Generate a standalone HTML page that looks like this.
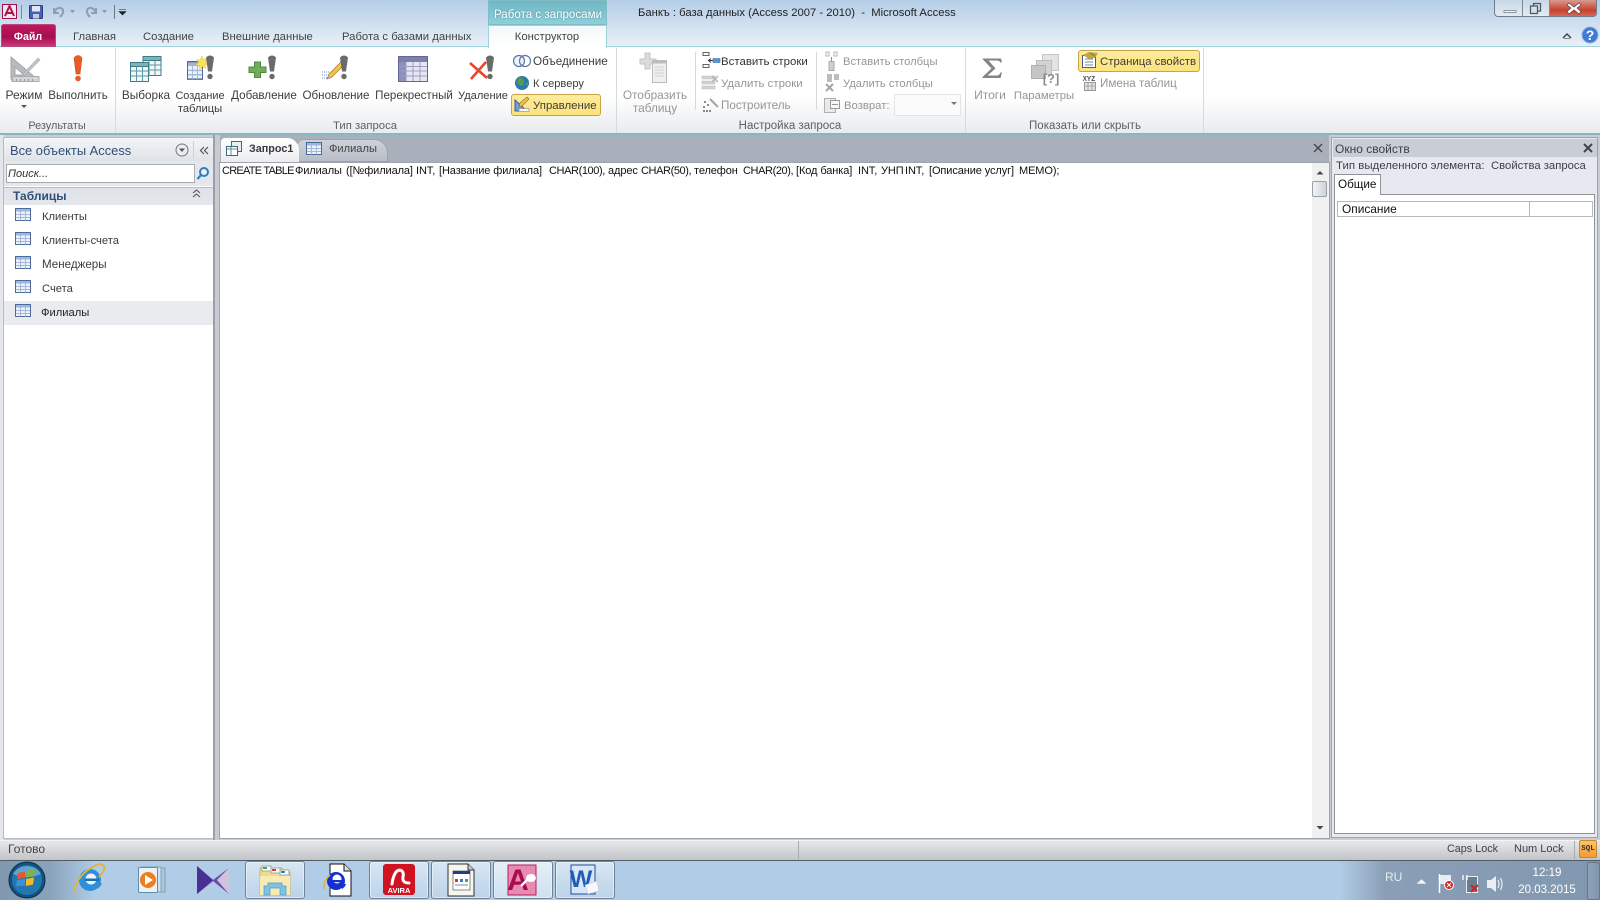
<!DOCTYPE html>
<html lang="ru"><head><meta charset="utf-8"><title>Банкъ</title>
<style>
html,body{margin:0;padding:0}
body{width:1600px;height:900px;overflow:hidden;position:relative;background:#c9cdd3;font:11.6px/16px "Liberation Sans","Noto Sans CJK SC",sans-serif;color:#3c3c3c}
div,span{position:absolute;white-space:nowrap}
.c{transform:translateX(-50%);text-align:center}
.d{color:#969696}
.g{color:#5c6066}
.tab{color:#444;top:29px;font-size:11.3px}
.box{box-sizing:border-box;border:1px solid #c9a24e;border-radius:3px;background:linear-gradient(#fdeb9e,#fde37a)}
.sep{width:1px;background:#d5dae0}
.n{font-size:11.2px}
.q{top:163px;color:#111;letter-spacing:-.1px;font-size:11px}
.l{letter-spacing:-.4px}
.tb{box-sizing:border-box;top:861px;height:38px;border:1px solid #6f8296;border-radius:3px;background:linear-gradient(#d8e6f3,#bcd3e9);box-shadow:inset 0 0 0 1px rgba(255,255,255,.45)}
svg{position:absolute;left:0;top:0}
</style></head><body>

<div style="left:0;top:0;width:1600px;height:47px;background:linear-gradient(#b4cde6,#e9f1f8)"></div>
<div style="left:488px;top:0;width:119px;height:25px;background:linear-gradient(#6fb7c4,#8fd0da);box-sizing:border-box;border:1px solid #7fbcc6"></div>
<span class="c" style="left:548px;top:7px;color:#fff;text-shadow:0 0 2px #4a8b98">Работа с запросами</span>
<div style="left:0;top:47px;width:1600px;height:86px;background:linear-gradient(#fff 0,#fff 58%,#e9ebee 100%)"></div>
<div style="left:0;top:46px;width:488px;height:1px;background:#9fd2da"></div>
<div style="left:607px;top:46px;width:993px;height:1px;background:#9fd2da"></div>
<div style="left:488px;top:25px;width:119px;height:23px;box-sizing:border-box;background:linear-gradient(#f3f9fb,#fff);border:1px solid #9fd2da;border-bottom:0"></div>
<div style="left:1px;top:24px;width:55px;height:23px;border-radius:3px 3px 0 0;background:linear-gradient(#c2185f,#a80c50 55%,#cf3a7a);box-shadow:inset 0 0 0 1px #b54a7c"></div>
<span class="c" style="left:28px;top:29px;color:#fff;font-weight:bold;font-size:10.6px">Файл</span>
<span class="tab" style="left:73px">Главная</span>
<span class="tab" style="left:143px">Создание</span>
<span class="tab" style="left:222px">Внешние данные</span>
<span class="tab" style="left:342px">Работа с базами данных</span>
<span class="tab c" style="left:547px">Конструктор</span>
<span style="left:638px;top:5px;color:#222;font-size:11.25px">Банкъ : база данных (Access 2007 - 2010)&nbsp; -&nbsp; Microsoft Access</span>

<div style="left:1494px;top:0;width:103px;height:17px;box-sizing:border-box;border:1px solid #6d7b8a;border-top:0;border-radius:0 0 4px 4px;background:linear-gradient(#c9d8e6,#e3ebf2);overflow:hidden"><div style="left:54px;top:0;width:50px;height:17px;background:linear-gradient(#d99a90,#c9402e 60%,#d8705f)"></div><div style="left:27px;top:0;width:1px;height:17px;background:#7c8a98"></div><div style="left:54px;top:0;width:1px;height:17px;background:#7c8a98"></div></div>

<!-- ribbon seps -->
<div class="sep" style="left:115px;top:48px;height:85px"></div>
<div class="sep" style="left:616px;top:48px;height:85px"></div>
<div class="sep" style="left:695px;top:52px;height:58px"></div>
<div class="sep" style="left:816px;top:52px;height:58px"></div>
<div class="sep" style="left:965px;top:48px;height:85px"></div>
<div class="sep" style="left:1203px;top:48px;height:85px"></div>

<!-- ribbon labels -->
<span class="c" style="left:24px;top:87px;font-size:12px">Режим</span>
<span class="c" style="left:78px;top:88px">Выполнить</span>
<span class="c g" style="left:57px;top:118px;font-size:10.9px">Результаты</span>
<span class="c" style="left:146px;top:87px;font-size:11.8px">Выборка</span>
<span class="c" style="left:200px;top:88px;font-size:10.9px">Создание</span>
<span class="c" style="left:200px;top:101px;font-size:11.2px">таблицы</span>
<span class="c" style="left:264px;top:88px">Добавление</span>
<span class="c" style="left:336px;top:88px">Обновление</span>
<span class="c" style="left:414px;top:88px;font-size:11.55px">Перекрестный</span>
<span class="c" style="left:483px;top:88px;font-size:11.1px">Удаление</span>
<span style="left:533px;top:54px;font-size:11.7px">Объединение</span>
<span style="left:533px;top:76px;font-size:11.1px">К серверу</span>
<div class="box" style="left:511px;top:94px;width:90px;height:22px"></div>
<span style="left:533px;top:98px;font-size:11.45px">Управление</span>
<span class="c g" style="left:365px;top:118px;font-size:11.3px">Тип запроса</span>
<span class="c d" style="left:655px;top:87px;font-size:11.8px">Отобразить</span>
<span class="c d" style="left:655px;top:100px;font-size:11.8px">таблицу</span>
<span style="left:721px;top:54px;color:#333;font-size:11.45px">Вставить строки</span>
<span class="d" style="left:721px;top:76px;font-size:11.4px">Удалить строки</span>
<span class="d" style="left:721px;top:98px;font-size:11.65px">Построитель</span>
<span class="d" style="left:843px;top:54px;font-size:11.2px">Вставить столбцы</span>
<span class="d" style="left:843px;top:76px;font-size:11.2px">Удалить столбцы</span>
<span class="d" style="left:844px;top:98px;font-size:11.3px">Возврат:</span>
<div style="left:894px;top:94px;width:67px;height:22px;box-sizing:border-box;border:1px solid #e2e4e7;background:#fbfbfb"></div>
<span class="c g" style="left:790px;top:118px;font-size:11.5px">Настройка запроса</span>
<span class="c d" style="left:990px;top:87px;font-size:12px">Итоги</span>
<span class="c d" style="left:1044px;top:88px;font-size:11.3px">Параметры</span>
<div class="box" style="left:1078px;top:50px;width:122px;height:22px"></div>
<span style="left:1100px;top:54px;font-size:11.4px">Страница свойств</span>
<span class="d" style="left:1100px;top:76px;font-size:11.65px">Имена таблиц</span>
<span class="c g" style="left:1085px;top:118px;font-size:11.55px">Показать или скрыть</span>

<!-- teal line -->
<div style="left:0;top:133px;width:1600px;height:2px;background:#84b9c3"></div>

<!-- nav pane -->
<div style="left:0;top:135px;width:4px;height:705px;background:#e3e6ea"></div>
<div style="left:4px;top:138px;width:209px;height:700px;background:#fff;box-shadow:0 0 0 1px #b8bcc2"></div>
<div style="left:4px;top:138px;width:209px;height:23px;background:linear-gradient(#f4f5f7,#dfe3e8)"></div>
<div style="left:4px;top:161px;width:209px;height:25px;background:#e4e7eb"></div>
<span style="left:10px;top:143px;color:#2f4f78;font-size:12.9px">Все объекты Access</span>
<div style="left:6px;top:164px;width:189px;height:19px;box-sizing:border-box;border:1px solid #a9adb3;background:#fff"></div>
<span style="left:8px;top:166px;font-style:italic;font-size:11px;color:#333">Поиск...</span>
<div style="left:4px;top:187px;width:209px;height:18px;background:linear-gradient(#dfe2e8,#e4e7ed);border-top:1px solid #b9bdc3;box-sizing:border-box"></div>
<span style="left:13px;top:188px;font-weight:bold;color:#2f4f78;font-size:12px">Таблицы</span>
<div style="left:4px;top:301px;width:209px;height:24px;background:#e9ebef"></div>
<span class="n" style="left:42px;top:208.500px;top:209px">Клиенты</span>
<span class="n" style="left:42px;top:233px">Клиенты-счета</span>
<span class="n" style="left:42px;top:257px;font-size:11.6px">Менеджеры</span>
<span class="n" style="left:42px;top:281px">Счета</span>
<span class="n" style="left:41px;top:305px;color:#222">Филиалы</span>
<div style="left:213px;top:135px;width:7px;height:705px;background:#c8ccd2;border-left:2px solid #9b9fa6;box-sizing:border-box"></div>

<!-- document -->
<div style="left:220px;top:135px;width:1109px;height:27px;background:#aab0bb"></div>
<div style="left:220px;top:162px;width:1109px;height:1px;background:#5f646c"></div>
<div style="left:296px;top:139px;width:92px;height:23px;background:linear-gradient(#cdd1d8,#b9bec7);border-radius:8px 14px 0 0;border:1px solid #9da2ab;box-sizing:border-box"></div>
<div style="left:221px;top:138px;width:78px;height:25px;background:linear-gradient(#fff,#e9ebee);border-radius:4px 12px 0 0"></div>
<span style="left:249px;top:141px;font-weight:bold;color:#3a3a3a;font-size:10.8px">Запрос1</span>
<span style="left:329px;top:141px;color:#444;font-size:11.1px">Филиалы</span>
<div style="left:220px;top:163px;width:1109px;height:675px;background:#fff;box-shadow:0 0 0 1px #a0a4aa"></div>
<span class="q" style="left:222px;letter-spacing:-.75px">CREATE TABLE</span>
<span class="q" style="left:295px">Филиалы</span>
<span class="q" style="left:346px">([№филиала]</span>
<span class="q" style="left:416px">INT,</span>
<span class="q" style="left:439px">[Название филиала]</span>
<span class="q l" style="left:549px">CHAR(100),</span>
<span class="q" style="left:608px">адрес</span>
<span class="q l" style="left:641px">CHAR(50),</span>
<span class="q" style="left:694px">телефон</span>
<span class="q l" style="left:743px">CHAR(20),</span>
<span class="q" style="left:796px">[Код банка]</span>
<span class="q" style="left:858px">INT,</span>
<span class="q" style="left:881px">УНП</span>
<span class="q" style="left:905px">INT,</span>
<span class="q" style="left:929px">[Описание услуг]</span>
<span class="q" style="left:1019px">MEMO);</span>
<div style="left:1312px;top:163px;width:17px;height:675px;background:#f0f0f0"></div>
<div style="left:1312px;top:181px;width:15px;height:16px;box-sizing:border-box;border:1px solid #9aa0a8;border-radius:2px;background:linear-gradient(90deg,#f4f4f4,#cfd2d6)"></div>

<!-- properties -->
<div style="left:1331px;top:137px;width:267px;height:701px;box-sizing:border-box;background:#e6e9ef;border:1px solid #9ea3aa"></div>
<div style="left:1333px;top:139px;width:264px;height:18px;background:#c9ced6"></div>
<span style="left:1335px;top:141px;color:#3d4048;font-size:12px">Окно свойств</span>
<span style="left:1336px;top:158px;color:#3d4048;font-size:11.45px">Тип выделенного элемента:</span>
<span style="left:1491px;top:158px;color:#3d4048;font-size:11.3px">Свойства запроса</span>
<div style="left:1334px;top:194px;width:261px;height:640px;box-sizing:border-box;background:#fff;border:1px solid #8e9298"></div>
<div style="left:1334px;top:174px;width:47px;height:21px;box-sizing:border-box;background:#fff;border:1px solid #8e9298;border-bottom:0"></div>
<span style="left:1338px;top:177px;color:#111;font-size:11.7px">Общие</span>
<div style="left:1337px;top:201px;width:256px;height:16px;box-sizing:border-box;background:#fff;border:1px solid #b5b7ba"></div>
<div style="left:1529px;top:201px;width:1px;height:16px;background:#b5b7ba"></div>
<span style="left:1342px;top:201px;color:#111;font-size:11.9px">Описание</span>

<!-- status -->
<div style="left:0;top:840px;width:1600px;height:20px;background:linear-gradient(#e7e8ea,#c2c4c8);border-top:1px solid #f2f3f4;box-sizing:border-box"></div>
<span style="left:8px;top:841px;color:#444;font-size:12px">Готово</span>
<div style="left:798px;top:841px;width:1px;height:18px;background:#a9abaf"></div>
<span style="left:1447px;top:841px;color:#3d4150;font-size:10.8px">Caps Lock</span>
<span style="left:1514px;top:841px;color:#3d4150;font-size:11px">Num Lock</span>
<div style="left:1574px;top:841px;width:1px;height:18px;background:#a9abaf"></div>
<div style="left:1579px;top:840px;width:18px;height:18px;box-sizing:border-box;border:1px solid #c8862e;border-radius:2px;background:linear-gradient(#fbc46a,#f39a32)"></div>
<span class="c" style="left:1588px;top:841px;font:bold 7.5px/16px 'Liberation Mono',monospace;color:#333">SQL</span>

<!-- taskbar -->
<div style="left:0;top:860px;width:1600px;height:40px;background:linear-gradient(90deg,#7f97af 0,#8aa3bb 50px,#b0cce6 95px,#b0cce6 1340px,#8a9fb6 1385px,#8298b0 1600px);border-top:1px solid #4f5c6a;box-sizing:border-box"></div>
<div class="tb" style="left:245px;width:60px"></div>
<div class="tb" style="left:369px;width:60px"></div>
<div class="tb" style="left:431px;width:60px"></div>
<div class="tb" style="left:493px;width:60px;background:linear-gradient(#e6eff7,#cfe0f0)"></div>
<div class="tb" style="left:555px;width:60px"></div>
<span style="left:1385px;top:869px;color:#e6ecf2;font-size:12px">RU</span>
<span class="c" style="left:1547px;top:865px;color:#fff;font-size:11.6px">12:19</span>
<span class="c" style="left:1547px;top:882px;color:#fff;font-size:11.5px">20.03.2015</span>
<div style="left:1587px;top:862px;width:13px;height:38px;box-sizing:border-box;border:1px solid #65778a;border-radius:2px;background:linear-gradient(90deg,#8ea3b9,#7f95ac)"></div>

<svg width="1600" height="900" viewBox="0 0 1600 900">
<defs>
<g id="ex"><path d="M-4 2Q0-2 4 2L2 16H-2Z" fill="#6a6a6a"/><circle cy="21" r="2.7" fill="#6a6a6a"/></g>
<g id="nt"><rect x=".5" y=".5" width="15" height="12" fill="#eef3fa" stroke="#4c6a9c"/><rect x="1" y="1" width="14" height="2.500" fill="#9fb6d8"/><path d="M5.500 3.500v9M10.500 3.500v9M1 6.500h14M1 9.500h14" stroke="#a3b8d6" fill="none"/></g>
<g id="tt"><rect x=".5" y=".5" width="18" height="19" fill="#f1f6f6" stroke="#3e7d87"/><rect x=".5" y=".5" width="18" height="4" fill="#7fb4b4" stroke="#3e7d87"/><path d="M6.500 4.500v15M12.500 4.500v15M1 9h17M1 14h17" stroke="#5f98a2" fill="none"/></g>
</defs>

<!-- QAT -->
<rect x="2.500" y="4.500" width="14" height="14" fill="#f5e6ee" stroke="#a01050"/><path d="M5 16L9.500 6 14 16M6.500 13h6" stroke="#a8124f" stroke-width="2" fill="none"/>
<path d="M21.500 5v14" stroke="#7d8a99"/>
<rect x="29.500" y="5.500" width="13" height="13" rx="1" fill="#4a5fb6" stroke="#2e3d7d"/><rect x="32" y="6" width="8" height="5.500" fill="#dfe6f5"/><rect x="33" y="14" width="6" height="4.500" fill="#c4cbda"/>
<path d="M54 8v5h5M54 13Q57 6 62 8.500 65 12 60 17" fill="none" stroke="#8f9eae" stroke-width="2"/>
<path d="M96 8v5h-5M96 13Q93 6 88 8.500 85 12 90 17" fill="none" stroke="#8f9eae" stroke-width="2"/>
<path d="M70 10h5l-2.500 3zM102 10h5l-2.500 3z" fill="#8a97a5"/>
<path d="M114.500 5v14" stroke="#6d7985"/><path d="M119 9.500h7M119 11.500h7l-3.500 3.500z" fill="#222" stroke="#222" stroke-width=".6"/>

<!-- Top right -->
<path d="M1504 10.500h12v2h-12z" fill="#f4f6f8" stroke="#6b7a88" stroke-width=".7"/>
<rect x="1533.500" y="3.500" width="7" height="7.500" fill="none" stroke="#4f5c68" stroke-width="1.300"/><rect x="1530.500" y="6" width="7" height="7.500" fill="#d7e0e8" stroke="#4f5c68" stroke-width="1.300"/>
<path d="M1569 4l5 4 5-4 2 2-4 3 4 3.500-2 2.500-5-4-5 4-2-2.500 4-3.500-4-3z" fill="#fff" stroke="#5a3f3c" stroke-width=".7" transform="translate(0 -1)"/>
<path d="M1563 38l4-4 4 4" fill="none" stroke="#444" stroke-width="1.500"/><path d="M1564 38.500h6" stroke="#888"/>
<circle cx="1590" cy="35" r="8" fill="#3f7bd0" stroke="#8cb1e4"/><text x="1590" y="40" font-family="Liberation Sans" font-weight="bold" font-size="14" fill="#fff" text-anchor="middle">?</text>

<!-- Режим -->
<path d="M11 57L37 79H11ZM15 67V75H24Z" fill="#b9bcbf" fill-rule="evenodd" stroke="#a3a6a9"/><rect x="12" y="76.500" width="27" height="5" fill="#d3d5d7" stroke="#a9acae"/><path d="M12.500 79v2M16.500 79v2M20.500 79v2M24.500 79v2M28.500 79v2M32.500 79v2" stroke="#999"/><path d="M23 74L38 58l2 2-15 15-3 1z" fill="#c3c5c8" stroke="#a5a8ab" stroke-width=".6"/><path d="M21 105h6l-3 3z" fill="#555"/>
<!-- Выполнить -->
<path d="M74 58Q78 53 82 58L80 74H76Z" fill="#ea5a28" stroke="#d34a1c" stroke-width=".6"/><circle cx="78" cy="78.500" r="2.800" fill="#ea5a28"/>
<!-- Выборка -->
<use href="#tt" x="142.500" y="56"/><use href="#tt" x="130" y="62"/>
<!-- Создание -->
<use href="#nt" transform="translate(187 61) scale(1 1.450)"/><path d="M202 56l1.500 3.500 3.500-1-1.500 3.500 3 2-3.500 1 1 3.500-3.500-2-2.500 2.500-.5-3.500-3.500-.5 2.500-2.500-2-3 3.500.5z" fill="#f6e35a" stroke="#e4c43e" stroke-width=".5"/>
<use href="#ex" x="210" y="55.500"/>
<!-- Добавление -->
<path d="M254.500 62h6v5h5.500v5.500h-5.500v5h-6v-5H249V67h5.500z" fill="#74ab5a" stroke="#4f8a3e"/>
<use href="#ex" x="272" y="55.500"/>
<!-- Обновление -->
<path d="M327 79l2-5 12-12 3 3-12 12z" fill="#f2c04c" stroke="#a47a2a" stroke-width=".7"/><path d="M340 62l2-2 3.500 3-2 2z" fill="#c45050"/><path d="M322 72h7M322 75h7M322 78h7" stroke="#6f8fcf" stroke-dasharray="1 1"/>
<use href="#ex" x="344" y="55.500"/>
<!-- Перекрестный -->
<rect x="398.500" y="56.500" width="29" height="25" fill="#e5e6f2" stroke="#62669a"/><rect x="399" y="57" width="7" height="24" fill="#8d90b8"/><rect x="399" y="57" width="28" height="5" fill="#7c80ab"/><path d="M406 62v19M413 62v19M420 62v19M399 66.500h28M399 71h28M399 76h28" stroke="#9b9ec2"/>
<!-- Удаление -->
<path d="M470 63l17 15M486 62l-15 17" stroke="#e8452a" stroke-width="2.600"/>
<use href="#ex" x="490" y="55.500"/>
<!-- Объединение / сервер / управление -->
<circle cx="519" cy="61" r="5.500" fill="#eef3fa" stroke="#5a75a8" stroke-width="1.200"/><circle cx="525" cy="61" r="5.500" fill="none" stroke="#5a75a8" stroke-width="1.200"/>
<circle cx="522" cy="83" r="7" fill="#2f78b8"/><path d="M518 78q5-1 6 3t-3 5q-3-1-4-4zM525 84l3-2v4z" fill="#4f9e4a"/>
<path d="M515 111V100l12 11Z" fill="#6e9de0" stroke="#2e5fb0"/><path d="M520 103l7-6 2 2-7 7-3 1z" fill="#f0c24c" stroke="#8a6a20" stroke-width=".6"/><rect x="519" y="108.500" width="10" height="3" fill="#f6f6f6" stroke="#888" stroke-width=".6"/>

<!-- Отобразить -->
<path d="M645 53h5v6h6v5h-6v5h-5v-5h-5v-5h5z" fill="#dcdcdc" stroke="#c5c5c5"/><rect x="652.500" y="60.500" width="14" height="22" fill="#efefef" stroke="#bcbcbc"/><rect x="652.500" y="60.500" width="14" height="3" fill="#bcbcbc"/><path d="M655 67h9M655 70h9M655 73h9M655 76h9" stroke="#cfcfcf"/>
<!-- rows -->
<path d="M703 52.500h6v3h-6zM703 64.500h6v3h-6z" fill="#fff" stroke="#333" stroke-width=".8"/><path d="M709 60.500h4" stroke="#333"/><path d="M711 58.500l-2.500 2 2.500 2" fill="none" stroke="#333"/><rect x="713" y="58.500" width="7" height="4" fill="#5f91d4" stroke="#3f6fb0" stroke-width=".6"/>
<path d="M702 76h13v3h-13zM702 81h13v3h-13zM702 86h13v3h-13z" fill="#d3d3d3" stroke="#bcbcbc" stroke-width=".6"/><path d="M712 76l6 6M718 76l-6 6" stroke="#b2b2b2" stroke-width="1.500"/>
<path d="M710 99l8 8" stroke="#a5a5a5" stroke-width="2"/><path d="M704 102h2M707 105h2M703 107h2M703 111h2M706 111h2M709 111h2" stroke="#666" stroke-width="1.500"/>
<!-- cols -->
<path d="M826 52h3v4h-3zM834 52h3v4h-3z" fill="none" stroke="#b5b5b5"/><path d="M831.500 57v4" stroke="#888"/><rect x="829" y="61.500" width="5" height="9" fill="#cfcfcf" stroke="#a8a8a8"/>
<path d="M827 74h5v8h-5zM834 74h5v6h-5z" fill="#bdbdbd"/><path d="M826 84l7 7M833 84l-7 7" stroke="#a5a5a5" stroke-width="2"/>
<rect x="824.500" y="98.500" width="11" height="14" fill="#eaeaea" stroke="#b0b0b0"/><rect x="830.500" y="100.500" width="9" height="8" fill="#f7f7f7" stroke="#999"/><path d="M832 104.500h6" stroke="#999"/>
<path d="M951 102h6l-3 3z" fill="#777"/>
<!-- Итоги -->
<path d="M983 58.500h18l1 4h-1.500q-1-2-4-2h-8l7 8-8 7h9q3 0 4-3h1.500l-1.500 5.500h-18v-1l9-8.500-9-9.500z" fill="#848484"/>
<!-- Параметры -->
<rect x="1042.500" y="54.500" width="16" height="16" fill="#e3e3e3" stroke="#c6c6c6"/><rect x="1036.500" y="60.500" width="15" height="14" fill="#d3d3d3" stroke="#bcbcbc"/><rect x="1031.500" y="65.500" width="14" height="13" fill="#c6c6c6" stroke="#aeaeae"/>
<text x="1051" y="83" font-family="Liberation Sans" font-weight="bold" font-size="13" fill="#8d8d8d" text-anchor="middle">[?]</text>
<!-- Страница свойств -->
<rect x="1082.500" y="55.500" width="13" height="12" fill="#fff" stroke="#3f5f90"/><path d="M1085 59h8M1085 62h8M1085 65h8" stroke="#6b87b5"/><path d="M1083 55l6-3 9 1-3 5-6 1z" fill="#c9a43c"/><path d="M1090 53l5 3" stroke="#5a9e5a" stroke-width="1.500"/>
<!-- Имена таблиц -->
<text x="1089" y="81" font-family="Liberation Mono" font-weight="bold" font-size="7" fill="#555" text-anchor="middle">XYZ</text>
<rect x="1084.500" y="82.500" width="11" height="8" fill="#e2e2e2" stroke="#9a9a9a"/><path d="M1088 83v7M1092 83v7M1085 86h10" stroke="#a9a9a9"/>

<!-- nav icons -->
<circle cx="182" cy="150" r="6" fill="#eaecef" stroke="#70757c"/><path d="M179 148.500h6l-3 3.500z" fill="#555"/>
<path d="M193.500 141v17" stroke="#cdd0d5"/><path d="M204 147l-3.500 3.500 3.500 3.500M208 147l-3.500 3.500 3.500 3.500" fill="none" stroke="#555" stroke-width="1.200"/>
<circle cx="204" cy="172" r="4" fill="#e8f2fb" stroke="#2f7fc0" stroke-width="2"/><path d="M201 175l-3.500 4" stroke="#2f7fc0" stroke-width="2.200"/>
<path d="M193 193l3.500-3 3.500 3M193 197l3.500-3 3.500 3" fill="none" stroke="#555" stroke-width="1.100"/>
<use href="#nt" x="15" y="208"/><use href="#nt" x="15" y="232"/><use href="#nt" x="15" y="256"/><use href="#nt" x="15" y="280"/><use href="#nt" x="15" y="304"/>
<!-- tab icons -->
<rect x="231.500" y="141.500" width="10" height="10" fill="#e5efef" stroke="#3e6c78"/><rect x="226.500" y="146.500" width="11" height="9" fill="#fff" stroke="#3e6c78"/><path d="M227 149h10M231 147v8" stroke="#5f8d98"/>
<use href="#nt" x="306" y="142"/>
<path d="M1314 148l8 8M1322 148l-8 8" transform="translate(0 -4)" stroke="#444" stroke-width="1.300"/>
<path d="M1584 144l8 8M1592 144l-8 8" stroke="#444" stroke-width="2"/>
<!-- scrollbar arrows -->
<path d="M1316.500 174.500h7l-3.500-3.500z" fill="#444"/><path d="M1316.500 826h7l-3.500 3.500z" fill="#444"/>

<!-- taskbar icons -->
<circle cx="27" cy="880" r="18" fill="#15517f" stroke="#0d2f4d"/><circle cx="27" cy="880" r="15" fill="#2278ad"/><path d="M13 874a15 12 0 0 1 28 0q-14 6-28 0z" fill="#7fb7dc" opacity=".7"/>
<path d="M18 873l7-1.500v6.500l-8 1z" fill="#e8562c"/><path d="M27 871l8-2-1 7-8 1.500z" fill="#7eb63c"/><path d="M17 880l8-1v6.500l-9 .5z" fill="#3f8fd8"/><path d="M26 879l8-1.500-1 7-7 1.500z" fill="#f3b82c"/>
<!-- IE -->
<circle cx="90" cy="880" r="11" fill="#2f8fd8"/><circle cx="91" cy="879" r="5.500" fill="#eaf4fb"/><rect x="85" y="878.500" width="14" height="2.500" fill="#1f6fb4"/><path d="M95 883h7a11 11 0 0 1-5 6z" fill="#2f8fd8"/><path d="M76 893Q72 886 84 873q16-13 20-7 2 4-5 11" fill="none" stroke="#e3b43a" stroke-width="1.800"/>
<!-- WMP -->
<rect x="145" y="868" width="20" height="24" fill="#a8c8dc" stroke="#7fa3bb"/><rect x="142" y="867" width="19" height="25" fill="#cfe1ec" stroke="#7fa3bb"/><rect x="138.500" y="867.500" width="19" height="25" rx="1" fill="#eaf2f6" stroke="#5f8ea8"/><circle cx="148" cy="880" r="8" fill="#ef7d1c"/><path d="M145 875l8 5-8 5z" fill="#fff"/>
<!-- VS -->
<path d="M197 866l16 14 16-12v26l-16-13-16 13z" fill="#6f4aa8"/><path d="M197 866l16 14-16 14z" fill="#4b2f92"/><path d="M229 868l-12 12 12 14z" fill="#cfc3de"/>
<!-- folder -->
<path d="M260 868h22l1 4h7v23h-30z" fill="#f2d98c" stroke="#cfb16a"/><rect x="262" y="866" width="9" height="5" fill="#fff" stroke="#9aa"/><rect x="263" y="867" width="4" height="2" fill="#3eaa4a"/><rect x="271" y="868" width="9" height="5" fill="#fff" stroke="#9aa"/><rect x="272" y="869" width="4" height="2" fill="#d03a2a"/><rect x="280" y="870" width="9" height="5" fill="#fff" stroke="#9aa"/><rect x="281" y="871" width="4" height="2" fill="#2f80d0"/>
<path d="M260 876h30v19h-30z" fill="#f8eab4"/><path d="M264 895v-9h4v-3h14v3h4v9h-6v-7h-10v7z" fill="#7ec3e4" stroke="#4f9cc4" stroke-width=".7"/>
<!-- IE doc -->
<path d="M330 864h14l7 7v25h-21z" fill="#fff" stroke="#111"/><path d="M344 864v7h7" fill="#ddd" stroke="#111"/>
<circle cx="336" cy="881" r="9" fill="#1430d0"/><circle cx="337" cy="879" r="4.500" fill="#fff"/><rect x="331" y="880" width="13" height="2.200" fill="#1430d0"/><path d="M341 884h5a9 9 0 0 1-4 5z" fill="#1430d0"/><path d="M324 889q-1-8 6-14" fill="none" stroke="#e3b43a" stroke-width="1.600"/>
<!-- Avira -->
<rect x="383" y="864" width="32" height="31" rx="3" fill="#cf1320"/><path d="M392 884q1-8 4-12 3-3 6-1 2 2 1 6-1 6 6 6" fill="none" stroke="#fff" stroke-width="3" stroke-linecap="round"/>
<text x="399" y="893" font-family="Liberation Sans" font-weight="bold" font-size="7.500" fill="#fff" text-anchor="middle">AVIRA</text>
<!-- doc -->
<path d="M448 864h20l6 6v26h-26z" fill="#f6f6ee" stroke="#333"/><path d="M468 864v6h6" fill="#ccc" stroke="#333"/><rect x="453" y="871" width="17" height="19" fill="#fff" stroke="#888"/><rect x="453" y="871" width="17" height="3" fill="#223a90"/><rect x="455" y="879" width="3" height="3" fill="#d03a2a"/><rect x="460" y="879" width="3" height="3" fill="#2f80d0"/><rect x="465" y="879" width="3" height="3" fill="#3eaa4a"/><path d="M455 885h13" stroke="#888"/>
<!-- Access -->
<path d="M508 865h28v30h-28z" fill="#e98ab0" stroke="#b21e63"/>
<text x="518" y="890" font-family="Liberation Sans" font-weight="bold" font-size="30" fill="#a80c50" text-anchor="middle">A</text>
<ellipse cx="531" cy="878" rx="5" ry="4" fill="#fff"/><path d="M527 880l-6 6" stroke="#fff" stroke-width="2.500"/>
<!-- Word -->
<path d="M571 865h24v29h-24z" fill="#d8e6f6" stroke="#1f4e9c"/>
<text x="581" y="887" font-family="Liberation Sans" font-weight="bold" font-size="24" fill="#1f5cb4" text-anchor="middle">W</text><path d="M585 885l12-4 2 10-11 3z" fill="#f6f8fb" stroke="#b8c4d4" stroke-width=".6"/>

<!-- tray -->
<path d="M1417 883.500l4.500-4 4.500 4z" fill="#f0f4f8" stroke="#fff" stroke-width=".4"/>
<path d="M1439.500 874v19" stroke="#fff" stroke-width="1.500"/><path d="M1440 875h11v9h-11z" fill="#e6edf4"/><circle cx="1449" cy="885" r="4.500" fill="#d8202a" stroke="#fff"/><path d="M1447 883l4 4M1451 883l-4 4" stroke="#fff"/>
<rect x="1466.500" y="876.500" width="11" height="16" fill="#6d7d8d" stroke="#e8eef4"/><path d="M1463 875v5M1467 875v5" stroke="#fff" stroke-width="1.300"/><path d="M1471 885l6 6M1478 885l-7 7" stroke="#d8202a" stroke-width="2.200"/>
<path d="M1487 880h4l5-4v16l-5-4h-4z" fill="#e8eef4"/><path d="M1498 880q2 4 0 8M1500.500 878q3 6 0 12" fill="none" stroke="#e8eef4" stroke-width="1.200"/>
</svg>
</body></html>
